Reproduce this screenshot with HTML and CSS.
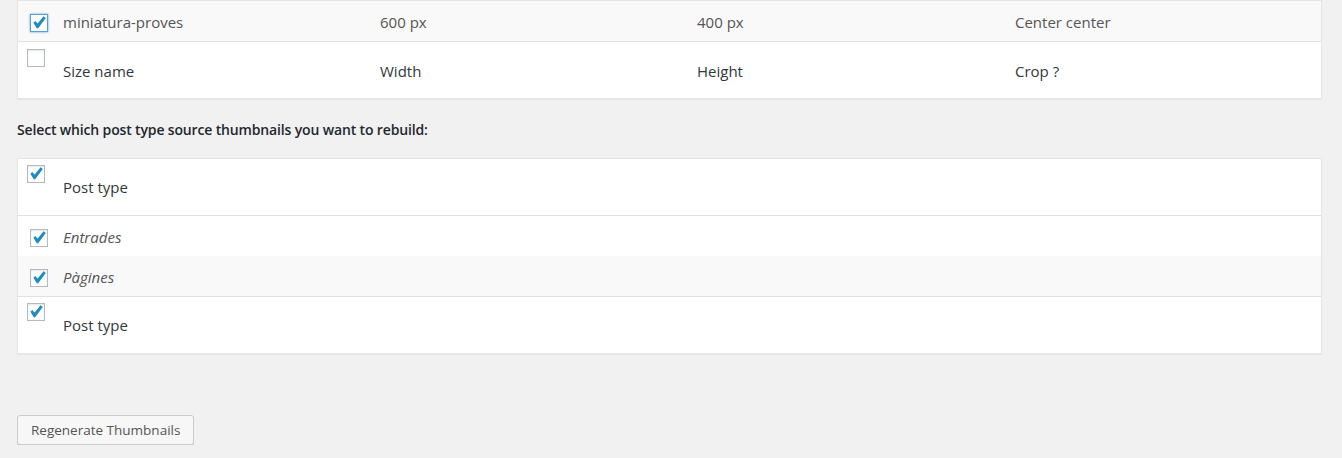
FILE: index.html
```html
<!DOCTYPE html>
<html>
<head>
<meta charset="utf-8">
<link rel="stylesheet" href="styles.css">
</head>
<body>
<div class="wrap">
  <div class="table">
    <div class="row body-row striped sizes">
      <div class="check-cell"><span class="cb checked focused"><svg viewBox="0 0 16 16"><path d="M2.4 7.7l1.8-1.7 2.4 2.4 6-7.1 2.2 1.6-7.6 10.3h-1.4z"/></svg></span></div>
      <div class="cell">miniatura-proves</div>
      <div class="cell">600 px</div>
      <div class="cell">400 px</div>
      <div class="cell">Center center</div>
    </div>
    <div class="row head-row sizes bt">
      <div class="check-cell"><span class="cb"></span></div>
      <div class="cell">Size name</div>
      <div class="cell">Width</div>
      <div class="cell">Height</div>
      <div class="cell">Crop ?</div>
    </div>
  </div>

  <p class="label">Select which post type source thumbnails you want to rebuild:</p>

  <div class="table">
    <div class="row head-row bb">
      <div class="check-cell"><span class="cb checked"><svg viewBox="0 0 16 16"><path d="M2.4 7.7l1.8-1.7 2.4 2.4 6-7.1 2.2 1.6-7.6 10.3h-1.4z"/></svg></span></div>
      <div class="cell">Post type</div>
    </div>
    <div class="row body-row">
      <div class="check-cell"><span class="cb checked"><svg viewBox="0 0 16 16"><path d="M2.4 7.7l1.8-1.7 2.4 2.4 6-7.1 2.2 1.6-7.6 10.3h-1.4z"/></svg></span></div>
      <div class="cell"><em>Entrades</em></div>
    </div>
    <div class="row body-row striped">
      <div class="check-cell"><span class="cb checked"><svg viewBox="0 0 16 16"><path d="M2.4 7.7l1.8-1.7 2.4 2.4 6-7.1 2.2 1.6-7.6 10.3h-1.4z"/></svg></span></div>
      <div class="cell"><em>Pàgines</em></div>
    </div>
    <div class="row head-row bt">
      <div class="check-cell"><span class="cb checked"><svg viewBox="0 0 16 16"><path d="M2.4 7.7l1.8-1.7 2.4 2.4 6-7.1 2.2 1.6-7.6 10.3h-1.4z"/></svg></span></div>
      <div class="cell">Post type</div>
    </div>
  </div>

  <div class="actions">
    <button class="button">Regenerate Thumbnails</button>
  </div>
</div>
</body>
</html>
```

FILE: styles.css
```css
html, body {
  margin: 0;
  padding: 0;
  background: #f1f1f1;
}
body {
  font-family: "Open Sans", "Noto Sans", sans-serif;
  font-size: 15px;
  color: #444;
}
.wrap {
  padding: 0 20px 0 17px;
}
.table {
  background: #fff;
  border: 1px solid #e5e5e5;
  box-shadow: 0 1px 1px rgba(0, 0, 0, 0.04);
}
.row {
  display: grid;
  grid-template-columns: 35px 1fr;
}
.row.sizes {
  grid-template-columns: 35px 317px 317px 318px 1fr;
}
.striped {
  background: #f9f9f9;
}
.bt {
  border-top: 1px solid #e1e1e1;
}
.bb {
  border-bottom: 1px solid #e1e1e1;
}
.cell {
  padding: 0 10px;
  line-height: 20px;
}
.body-row {
  height: 40px;
}
.body-row .cell {
  padding-top: 11px;
  color: #555;
}
.body-row .check-cell {
  padding: 13px 0 0 12px;
}
.head-row {
  height: 56px;
}
.head-row .cell {
  padding-top: 18px;
  color: #32373c;
}
.head-row .check-cell {
  padding: 6px 0 0 9px;
}
.head-row.sizes .cell {
  padding-top: 19px;
}
.head-row.sizes .check-cell {
  padding-top: 7px;
}
.cb {
  display: block;
  position: relative;
  width: 18px;
  height: 18px;
  box-sizing: border-box;
  border: 1px solid #b4b9be;
  background: #fff;
  box-shadow: inset 0 1px 2px rgba(0, 0, 0, 0.1);
}
.cb.focused {
  border-color: #5b9dd9;
  box-shadow: 0 0 2px rgba(30, 140, 190, 0.8);
}
.cb svg {
  position: absolute;
  left: 0;
  top: 0;
  width: 16px;
  height: 16px;
  fill: #1e8cbe;
}
em {
  font-style: italic;
}
.label {
  margin: 0;
  padding: 21px 0 18px;
  font-size: 14px;
  line-height: 20px;
  font-weight: 600;
  letter-spacing: -0.15px;
  color: #23282d;
}
.actions {
  padding-top: 61px;
}
.button {
  font-family: inherit;
  height: 30px;
  padding: 0 13px 1px;
  font-size: 13.5px;
  line-height: 28px;
  color: #555;
  background: #f7f7f7;
  border: 1px solid #ccc;
  border-radius: 3px;
  box-shadow: 0 1px 0 #ccc;
  cursor: pointer;
}
```
